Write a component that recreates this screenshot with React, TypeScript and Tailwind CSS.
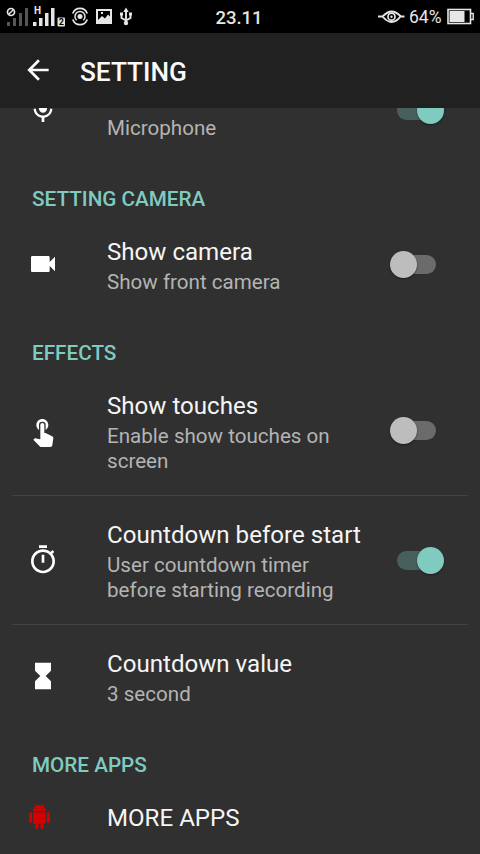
import type { ReactNode } from 'react';
import clsx from 'clsx';
import { MdArrowBack, MdHourglassFull, MdTouchApp, MdVideocam } from 'react-icons/md';

interface RowProps {
  icon: ReactNode;
  title?: string;
  summary?: string[];
  checked?: boolean;
  className?: string;
}

function MicIcon() {
  return (
    <svg width="1em" height="1em" viewBox="0 0 24 24" fill="currentColor">
      <path d="M12 14c1.660 0 2.990-1.340 2.990-3L15 5c0-1.660-1.340-3-3-3S9 3.340 9 5v6c0 1.660 1.340 3 3 3zm5.300-3c0 3-2.540 5.100-5.300 5.100S6.700 14 6.700 11H5c0 3.410 2.720 6.230 6 6.720V21h2v-3.280c3.280-.48 6-3.300 6-6.720h-1.700z" />
    </svg>
  );
}

function TimerIcon() {
  return (
    <svg width="1em" height="1em" viewBox="0 0 24 24" fill="currentColor">
      <path d="M15 1H9v2h6V1zm-4 13h2V8h-2v6zm8.030-6.610l1.420-1.420c-.43-.51-.9-.99-1.410-1.410l-1.420 1.420C16.070 4.740 14.120 4 12 4c-4.970 0-9 4.030-9 9s4.020 9 9 9 9-4.030 9-9c0-2.120-.74-4.070-1.970-5.610zM12 20c-3.870 0-7-3.130-7-7s3.130-7 7-7 7 3.130 7 7-3.130 7-7 7z" />
    </svg>
  );
}

function AndroidIcon() {
  return (
    <svg className="ml-[-0.500px] -mt-[2px] text-[#d50000]" width="25" height="25" viewBox="0 0 24 24" fill="currentColor">
      {/* body and legs */}
      <path d="M6 18c0 .55.45 1 1 1h1v3.500c0 .83.67 1.500 1.500 1.500s1.500-.67 1.500-1.500V19h2v3.500c0 .83.67 1.500 1.500 1.500s1.500-.67 1.500-1.500V19h1c.55 0 1-.45 1-1V8H6v10z" />
      {/* arms */}
      <path d="M3.500 8C2.670 8 2 8.670 2 9.500v7c0 .83.67 1.500 1.500 1.500S5 17.330 5 16.500v-7C5 8.670 4.330 8 3.500 8zm17 0c-.83 0-1.500.67-1.500 1.500v7c0 .83.67 1.500 1.500 1.500s1.500-.67 1.500-1.500v-7c0-.83-.67-1.500-1.500-1.500z" />
      {/* head */}
      <path d="M15.530 2.160l1.300-1.300c.2-.2.2-.51 0-.71-.2-.2-.51-.2-.71 0l-1.480 1.480C13.850 1.230 12.950 1 12 1c-.96 0-1.860.23-2.660.63L7.850.15c-.2-.2-.51-.2-.71 0-.2.2-.2.51 0 .71l1.310 1.310C6.970 3.260 6 5.010 6 7h12c0-1.990-.97-3.750-2.470-4.840zM10 5H9V4h1v1zm5 0h-1V4h1v1z" />
    </svg>
  );
}

function Toggle({ checked }: { checked: boolean }) {
  return (
    <div
      className={clsx(
        'mr-[36px] flex h-[27px] w-[55px] items-center',
        checked ? 'justify-end' : 'justify-start',
      )}
    >
      <div
        className={clsx(
          'flex h-[19px] w-[39px] shrink-0 items-center rounded-full',
          checked ? 'mr-[8px] justify-end bg-[#48605c]' : 'ml-[8px] justify-start bg-[#6b6b6b]',
        )}
      >
        <div
          className={clsx(
            'size-[27px] shrink-0 rounded-full shadow-[0_1px_2px_rgba(0,0,0,0.45)]',
            checked ? '-mr-[8px] bg-[#80cbc0]' : '-ml-[7px] bg-[#bdbdbd]',
          )}
        />
      </div>
    </div>
  );
}

function Row({ icon, title, summary = [], checked, className }: RowProps) {
  return (
    <div className={clsx('flex shrink-0 items-center', className)}>
      <div className="flex w-[107px] shrink-0 pl-[27px] text-[32px] text-white">{icon}</div>
      <div className="flex-1 pt-[2px] whitespace-nowrap">
        <p className={clsx('h-[32px] text-[24.100px] text-[#f5f5f5]', summary.length ? 'leading-[30px]' : 'leading-[32px]')}>
          {title}
        </p>
        {summary.map((line) => (
          <p key={line} className="text-[20.600px] leading-[25px] text-[#b4b4b4] first-of-type:mt-0">
            <span className="relative top-px">{line}</span>
          </p>
        ))}
      </div>
      {checked !== undefined && <Toggle checked={checked} />}
    </div>
  );
}

function Header({ children }: { children: string }) {
  return (
    <h2 className="flex h-[50px] shrink-0 items-end pb-[1px] pl-[32px] text-[20.700px] leading-[24px] font-medium text-[#80cbc0]">
      {children}
    </h2>
  );
}

function Divider() {
  return <div className="mx-[12px] h-px shrink-0 bg-[#424242]" />;
}

function StatusBar() {
  return (
    <div className="flex h-[33px] shrink-0 items-center bg-black text-[#e6e6e6]">
      <svg width="140" height="33" viewBox="0 0 140 33" fill="none" stroke="currentColor">
        {/* first sim, no signal */}
        <g fill="#555" stroke="none">
          <rect x="7" y="22" width="3" height="4" />
          <rect x="13" y="18" width="3" height="8" />
          <rect x="19" y="13" width="3" height="13" />
          <rect x="25" y="8" width="3" height="18" />
        </g>
        <circle cx="11" cy="12" r="3.500" strokeWidth="1.700" />
        <path d="M8.500 14.500 13.500 9.500" strokeWidth="1.500" />
        {/* second sim */}
        <g fill="currentColor" stroke="none">
          <rect x="33" y="22" width="3.500" height="4" />
          <rect x="39" y="18" width="3.500" height="8" />
          <rect x="45" y="13" width="3.500" height="13" />
          <rect x="51" y="8" width="3.500" height="18" />
          <rect x="57.500" y="17.500" width="7.500" height="9" rx="1" />
          <text x="34" y="14" fontSize="10" fontWeight="700" fontFamily="Roboto">H</text>
          <text x="58.800" y="25.400" fontSize="9" fontWeight="700" fontFamily="Roboto" fill="#000">2</text>
        </g>
        {/* hotspot rings */}
        <circle cx="80" cy="16.500" r="2.500" fill="currentColor" stroke="none" />
        <path d="M76.700 20.300a5 5 0 1 1 6.600 0" strokeWidth="1.500" />
        <path d="M72.800 13.500a7.600 7.600 0 0 1 14.400 0M72.800 19.500a7.600 7.600 0 0 0 14.400 0" strokeWidth="1.700" />
        {/* picture */}
        <path
          fill="currentColor"
          stroke="none"
          fillRule="evenodd"
          d="M96 9h16v15H96zM98 11v9l4-4 3 2.500 3-4 2 2V11zM101 12h2v2h-2z"
        />
        {/* usb */}
        <path d="M126 11v11M121.500 14v4l4.500 2.500 4.500-2.500v-4" strokeWidth="1.900" />
        <path d="M126 7.500 128.700 12h-5.400zM120 12.500h3v3h-3zM129 12.500h3v3h-3z" fill="currentColor" stroke="none" />
        <circle cx="126" cy="23" r="2.200" fill="currentColor" stroke="none" />
      </svg>
      <span className="w-[198px] pt-[2px] text-center text-[18.500px] leading-[24px] font-medium">23.11</span>
      <div className="flex flex-1 items-center pl-[40px]">
        <svg width="28" height="20" viewBox="0 0 28 20" fill="none" stroke="currentColor">
          <path
            d="M0 9.500h4.500C8 6 10.500 4.500 13.500 4.500S19.500 6 23 9.500h3.500M4.500 9.500C8 13.500 10.500 15 13.500 15S19.500 13.500 22.500 9.500"
            strokeWidth="1.800"
          />
          <circle cx="13.500" cy="9.700" r="3.500" strokeWidth="1.700" />
          <circle cx="13.500" cy="9.700" r="1.200" fill="currentColor" stroke="none" />
        </svg>
        <span className="ml-[3px] w-[38px] text-[17.500px] leading-[24px] whitespace-nowrap">64%</span>
        <svg className="shrink-0" width="28" height="17" viewBox="0 0 28 17" fill="none" stroke="currentColor">
          <rect x="1" y="1.500" width="22.500" height="14" strokeWidth="1.600" />
          <rect x="2.500" y="3" width="15" height="11" fill="currentColor" stroke="none" />
          <path d="M24 5.500h2.200v6H24" strokeWidth="1.400" />
        </svg>
      </div>
    </div>
  );
}

export default function App() {
  return (
    <div className="flex h-[854px] w-[480px] flex-col overflow-hidden bg-[#303030] font-[Roboto,sans-serif]">
      <StatusBar />

      <header className="flex h-[75px] shrink-0 items-center bg-[#212121] pl-[22px] text-[#fafafa]">
        <MdArrowBack size={32} className="-mt-[1px]" />
        <h1 className="ml-[26px] pt-[3px] text-[26.200px] leading-[30px] font-medium">SETTING</h1>
      </header>

      {/* list is scrolled, so the first row sits partly under the header */}
      <main className="min-h-0 flex-1 overflow-hidden">
        <div className="-mt-[50px] flex flex-col">
          <Row className="h-[104px]" icon={<MicIcon />} summary={['Microphone']} checked />

          <Header>SETTING CAMERA</Header>
          <Row
            className="h-[104px]"
            icon={<MdVideocam />}
            title="Show camera"
            summary={['Show front camera']}
            checked={false}
          />

          <Header>EFFECTS</Header>
          <Row
            className="h-[129px]"
            icon={<MdTouchApp />}
            title="Show touches"
            summary={['Enable show touches on', 'screen']}
            checked={false}
          />
          <Divider />
          <Row
            className="h-[128px]"
            icon={<TimerIcon />}
            title="Countdown before start"
            summary={['User countdown timer', 'before starting recording']}
            checked
          />
          <Divider />
          <Row
            className="h-[103px]"
            icon={<MdHourglassFull className="-mt-[2px]" />}
            title="Countdown value"
            summary={['3 second']}
          />

          <Header>MORE APPS</Header>
          <Row className="h-[78px]" icon={<AndroidIcon />} title="MORE APPS" />
        </div>
      </main>
    </div>
  );
}
